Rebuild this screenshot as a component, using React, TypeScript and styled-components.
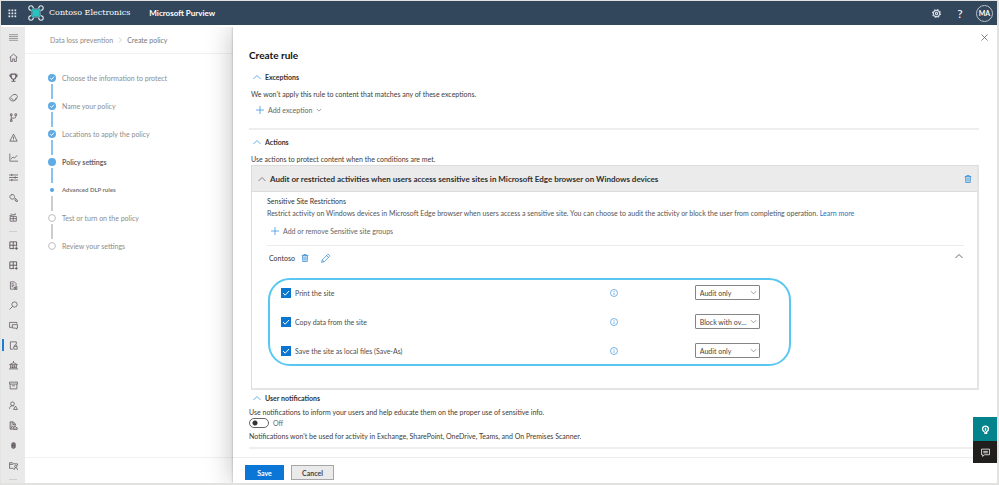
import React from 'react';
import styled, { createGlobalStyle, css } from 'styled-components';

const Global = createGlobalStyle`
  *, *::before, *::after { box-sizing: border-box; }
  body { margin: 0; background: #fff; }
  body, button, select, input { font-family: Lato, "Open Sans", "Noto Sans", sans-serif; }
  button { padding: 0; border: 0; background: none; color: inherit; }
  h1, h2, h3, p, ol, ul { margin: 0; padding: 0; }
  ol, ul { list-style: none; }
`;

/* ---------- shell ---------- */

const Page = styled.div`
  display: flex;
  flex-direction: column;
  min-height: 100vh;
  overflow: hidden;
  border: solid #e2e3e1;
  border-width: 1px 2px 2px 1px;
  font-size: 7px;
  line-height: 12px;
  color: #3d3b38;
`;

const TopBar = styled.header`
  display: flex;
  align-items: center;
  height: 24px;
  padding: 0 4px 0 6px;
  background: #33475c;
  color: #fff;
  position: relative;
  z-index: 2;
`;

const BarButton = styled.button`
  display: flex;
  align-items: center;
  justify-content: center;
  width: 24px;
  height: 24px;
`;

const WaffleButton = styled(BarButton)`
  width: 10px;
`;

const Brand = styled.a`
  display: flex;
  align-items: center;
  gap: 5px;
  margin-left: 11px;
  color: #fff;
  text-decoration: none;
  font: 8px/12px "DejaVu Serif", serif;
`;

const Product = styled.span`
  margin-left: 19px;
  font-size: 8px;
  font-weight: 700;
`;

const BarActions = styled.div`
  display: flex;
  align-items: center;
  margin-left: auto;
`;

const Help = styled(BarButton)`
  font-size: 12px;
`;

const Avatar = styled.button`
  width: 17px;
  height: 17px;
  margin-left: 4px;
  border: 1px solid #b9c2cb;
  border-radius: 50%;
  font-size: 7px;
  font-weight: 700;
  line-height: 15px;
`;

const Body = styled.div`
  display: grid;
  grid-template-columns: 24px minmax(160px, 208px) minmax(0, 1fr);
  flex: 1;
  margin-top: 2px;
  overflow: hidden;
`;

/* ---------- navigation rail ---------- */

const Rail = styled.nav`
  background: #e9e9e9;
`;

const RailItem = styled.button<{ $active?: boolean }>`
  display: flex;
  align-items: center;
  justify-content: center;
  width: 100%;
  height: 20px;
  color: #625b60;
  ${(p) => p.$active && css`
    background: linear-gradient(#1b7fd6, #1b7fd6) 1px center / 2px 12px no-repeat;
  `}
`;

const RailDivider = styled.hr`
  width: 8px;
  height: 1px;
  margin: 4px auto 3px;
  border: 0;
  background: #cfcfcf;
`;

/* ---------- wizard column ---------- */

const Wizard = styled.main`
  display: flex;
  flex-direction: column;
  background: #fff;
`;

const Crumbs = styled.nav`
  display: flex;
  align-items: center;
  gap: 4px;
  height: 27px;
  padding-left: 25px;
  border-bottom: 1px solid #f1f1f1;
  color: #777;
`;

const Crumb = styled.a`
  color: #8b8b8b;
  text-decoration: none;
`;

const Steps = styled.ol`
  flex: 1;
  padding: 18px 0 0 23px;
`;

const Step = styled.li<{ $kind: string }>`
  display: grid;
  grid-template-columns: 8px 1fr;
  column-gap: 6px;
  height: 28px;
  color: #8c8c8c;
  ${(p) => p.$kind === 'current' && css`font-weight: 700; color: #666;`}
  ${(p) => p.$kind === 'sub' && css`font-size: 6px; font-weight: 700; color: #777;`}
`;

const Track = styled.div`
  display: flex;
  flex-direction: column;
  align-items: center;
`;

const Marker = styled.span`
  display: flex;
  flex: none;
  align-items: center;
  justify-content: center;
  height: 12px;
`;

const Line = styled.span<{ $done: boolean }>`
  flex: 1;
  width: 2px;
  margin-bottom: 1px;
  background: ${(p) => (p.$done ? '#8cc3ee' : '#cdcdcd')};
`;

const WizardFoot = styled.div`
  height: 26px;
  border-top: 1px solid #f1f1f1;
`;

/* ---------- rule panel ---------- */

const Panel = styled.section`
  position: relative;
  display: flex;
  flex-direction: column;
  background: #fff;
  box-shadow: 0 0 2px rgba(0, 0, 0, 0.3), 0 0 26px rgba(0, 0, 0, 0.26);
`;

const CloseRow = styled.div`
  display: flex;
  justify-content: flex-end;
  padding: 4px 8px 0 0;
`;

const IconButton = styled.button`
  display: flex;
  align-items: center;
  justify-content: center;
  width: 10px;
  height: 12px;
  color: #555;
`;

const PanelBody = styled.div`
  flex: 1;
  padding: 4px 18px 0 16px;
`;

const Title = styled.h1`
  padding-bottom: 8px;
  font-size: 10px;
  line-height: 16px;
  color: #111;
`;

const Section = styled.section`
  padding-bottom: 7px;
  border-bottom: 2px solid #eee;
`;

const ActionsSection = styled.section`
  padding-top: 6px;
`;

const NoticeSection = styled(Section)`
  padding: 2px 0 5px;
`;

const SectionTitle = styled.h2`
  display: flex;
  align-items: center;
  gap: 4px;
  padding-left: 4px;
  font-size: 7px;
  line-height: 12px;
  color: #333;
`;

const Text = styled.p`
  padding: 5px 0 0 2px;
`;

const NoticeText = styled.p`
  padding-top: 2px;
`;

const AddButton = styled.button`
  display: flex;
  align-items: center;
  gap: 4px;
  margin-top: 4px;
  padding-left: 7px;
  height: 12px;
  font-size: 7px;
  color: #666;
`;

const AddException = styled(AddButton)`
  margin-bottom: 5px;
`;

const Card = styled.div`
  margin-left: 2px;
  border: 1px solid #dcdcdc;
  border-right: 2px solid #e4e4e4;
  border-bottom: 2px solid #e4e4e4;
`;

const CardHead = styled.div`
  display: flex;
  align-items: center;
  height: 26px;
  gap: 4px;
  padding: 0 4px 0 6px;
  border-bottom: 1px solid #dcdcdc;
  background: #ebebeb;
`;

const CardTitle = styled.h3`
  flex: 1;
  font-size: 8px;
  color: #2f2f2f;
`;

const CardBody = styled.div`
  padding: 3px 13px 22px 15px;
`;

const GroupTitle = styled.h3`
  font-size: 7px;
  font-weight: 400;
  color: #333;
`;

const Muted = styled.p`
  color: #545454;
`;

const Link = styled.a`
  color: #1476c6;
  text-decoration: none;
`;

const AddGroups = styled(AddButton)`
  margin-top: 6px;
  padding-left: 4px;
`;

const GroupRow = styled.div`
  display: flex;
  align-items: center;
  gap: 11px;
  margin-top: 8px;
  padding: 6px 0 0 2px;
  border-top: 1px solid #ebebeb;
`;

const GroupName = styled.span`
  margin-right: -6px;
  color: #333;
`;

const GroupToggle = styled(IconButton)`
  align-self: flex-start;
  height: 8px;
  margin-left: auto;
`;

const Activities = styled.ul`
  display: grid;
  row-gap: 14px;
  width: 75%;
  min-width: 320px;
  margin: 14px 0 0 1px;
  padding: 5px 29px 6px 11px;
  border: 2px solid #58c8f2;
  border-radius: 22px;
`;

const Activity = styled.li`
  display: grid;
  grid-template-columns: minmax(0, 1fr) 86px 65px;
  align-items: center;
`;

const CheckLabel = styled.label`
  display: flex;
  align-items: center;
  gap: 4px;
  color: #4c4c4c;
`;

const Check = styled.input`
  appearance: none;
  width: 10px;
  height: 10px;
  margin: 0;
  background: #fff;
  border: 1px solid #0b76d0;
  &:checked {
    border: 0;
    background:
      url("data:image/svg+xml,%3Csvg xmlns='http://www.w3.org/2000/svg' viewBox='0 0 10 10' fill='none' stroke='white'%3E%3Cpath d='M2 5l2.200 2.200L8 3'/%3E%3C/svg%3E")
      #0b76d0;
  }
`;

const SelectBox = styled.div`
  display: grid;
  align-items: center;
  > * { grid-area: 1 / 1; }
  > svg { justify-self: end; margin-right: 3px; pointer-events: none; }
`;

const Select = styled.select`
  appearance: none;
  width: 100%;
  height: 15px;
  padding: 0 11px 0 4px;
  border: 1px solid #858585;
  border-radius: 1px;
  background: #fff;
  font-size: 7px;
  line-height: 12px;
  color: #444;
  text-overflow: ellipsis;
`;

const ToggleLabel = styled.label`
  display: flex;
  align-items: center;
  gap: 4px;
  height: 10px;
  color: #666;
`;

const Toggle = styled.input`
  appearance: none;
  width: 20px;
  height: 10px;
  margin: 0;
  border: 1px solid #666;
  border-radius: 5px;
  background: radial-gradient(circle at 5px 4px, #333 2px, transparent 3px);
  &:checked { background: radial-gradient(circle at 13px 4px, #333 2px, transparent 3px); }
`;

const PanelFoot = styled.footer`
  display: flex;
  align-items: center;
  gap: 7px;
  height: 26px;
  padding: 4px 12px 0;
  border-top: 1px solid #ededed;
`;

const Button = styled.button<{ $primary?: boolean }>`
  height: 15px;
  padding: 0 10px;
  min-width: ${(p) => (p.$primary ? 39 : 42)}px;
  border: 1px solid ${(p) => (p.$primary ? '#0b76d6' : '#a6a6a6')};
  background: ${(p) => (p.$primary ? '#0b76d6' : '#eaeaea')};
  color: ${(p) => (p.$primary ? '#fff' : '#444')};
  font-size: 7px;
  font-weight: 700;
`;

const HelpDock = styled.aside`
  position: absolute;
  right: 0;
  bottom: 20px;
`;

const DockButton = styled.button<{ $dark?: boolean }>`
  display: flex;
  align-items: center;
  justify-content: center;
  width: 24px;
  height: ${(p) => (p.$dark ? 22 : 24)}px;
  background: ${(p) => (p.$dark ? '#201f1e' : '#03838b')};
  color: #fff;
`;

/* ---------- icons ---------- */

const Svg = ({ size = 9, w = 1.4, color, children }: { size?: number; w?: number; color?: string; children: React.ReactNode }) => (
  <svg width={size} height={size} viewBox="0 0 16 16" fill="none" stroke={color || 'currentColor'} strokeWidth={w} aria-hidden="true">
    {children}
  </svg>
);

const Chevron = ({ up, size = 8, color = '#666', w = 1.6 }: { up?: boolean; size?: number; color?: string; w?: number }) => (
  <Svg size={size} color={color} w={w}><path d={up ? 'M1 12l7-7 7 7' : 'M2 5l6 6 6-6'} /></Svg>
);

const Plus = () => <Svg size={8} color="#3f97dc" w={1.6}><path d="M8 0v16M0 8h16" /></Svg>;

const Trash = () => (
  <Svg size={8} color="#2f8bd3" w={1.5}>
    <path d="M1.500 3h13M5.500 3V1h5v2M3 3l.5 12h9L13 3M6.300 6v6M9.700 6v6" />
    <path d="M4 4h8v10H4z" fill="#8fc3ea" stroke="none" opacity=".6" />
  </Svg>
);

const Pencil = () => (
  <Svg size={9} color="#2f8bd3" w={1.3}><path d="M1 15l1.200-4.500L11.500 1.200a1.800 1.800 0 0 1 2.600 0l.7.7a1.800 1.800 0 0 1 0 2.600L5.500 13.800zM10 2.800L13.200 6M2.200 10.500l3.300 3.300" /></Svg>
);

const Info = () => <Svg size={8} color="#3f97dc" w={1.4}><circle cx="8" cy="8" r="7" /><path d="M8 7v5M8 4v1.500" /></Svg>;

const Waffle = () => (
  <svg width="9" height="9" viewBox="0 0 9 9" fill="#e4e9ee" aria-hidden="true">
    {[0, 3, 6].map((y) => [0, 3, 6].map((x) => <rect key={`${x}${y}`} x={x + 0.5} y={y + 0.5} width="1.700" height="1.700" />))}
  </svg>
);

const Logo = () => (
  <svg width="16" height="16" viewBox="0 0 32 32" fill="none" aria-hidden="true">
    <g stroke="#dfe8ec" strokeWidth="2.400">
      <path d="M10.500 6.500A4.500 4.500 0 1 0 6.500 10.500M21.500 6.500a4.500 4.500 0 1 1 4 4M10.500 25.500a4.500 4.500 0 1 1-4-4M21.500 25.500a4.500 4.500 0 1 0 4-4" />
      <path d="M10.500 6c2 3 9 3 11 0M10.500 26c2-3 9-3 11 0M6 10.500c3 2 3 9 0 11M26 10.500c-3 2-3 9 0 11" strokeWidth="1.400" />
    </g>
    <path d="M8 8c4 4 12 4 16 0-4 4-4 12 0 16-4-4-12-4-16 0 4-4 4-12 0-16z" fill="#27c3c3" stroke="#27c3c3" strokeWidth="3" />
  </svg>
);

const Gear = () => (
  <Svg size={9} w={2} color="#d3dae1"><circle cx="8" cy="8" r="5.500" /><circle cx="8" cy="8" r="2" /><circle cx="8" cy="8" r="7" strokeDasharray="2.700 2.800" /></Svg>
);

const railTop: [string, React.ReactNode][] = [
  ['Menu', <path d="M0 3h16M0 6.300h16M0 9.700h16M0 13h16" strokeWidth="1" />],
  ['Home', <path d="M1 8l7-6 7 6M3 7v8h3.500v-4.500h3V15H13V7" />],
  ['Compliance score', <path d="M4 2h8v5a4 4 0 0 1-8 0zM4 3.500H1.500c0 3 1 4 2.800 4.500M12 3.500h2.500c0 3-1 4-2.800 4.500M8 11v3M4.500 14.500h7" strokeWidth="1.800" />],
  ['Classification', <path d="M1 9l6-6 5.500-.5L15 6l-2 5-4 3H5l-3-2zM10 13l2.500-4M4 9l4 4" />],
  ['Connectors', <path d="M4 4v9M4 9h5.500a2.500 2.500 0 0 0 2.500-2.500V5M2.500 1.500h3v3h-3zM10.500 1.500h3v3h-3zM2.500 12h3v3h-3z" />],
  ['Alerts', <path d="M8 2l6.500 12.500h-13zM8 6.500V11M8 12v1.500" />],
  ['Reports', <path d="M1.500 1v13.500H16M3.500 11l3.500-4 3 2 4.500-5" />],
  ['Policies', <path d="M0 3.500h16M0 8h16M0 12.500h16M5 1.500v4M11 6v4M5 10.500v4" />],
  ['Permissions', <path d="M9 9.500A4.200 4.200 0 1 1 9.800 8l5.200 5v2h-2.500v-1.500H11V12zM4.500 4.500h1" />],
  ['Trials', <path d="M2 6h11v8.500H2zM1 4.500l11-2M7.500 6v8M5 3L4 1M9.500 2.500L11 .5M2 10h11" />],
];

const railBottom: [string, React.ReactNode, boolean?][] = [
  ['Solutions', <path d="M1.500 1.500h12v8M1.500 1.500v12h8M7.500 1.500v12M1.500 7.500h12M13 10v6M10 13h6" strokeWidth="1.700" />],
  ['Catalog', <path d="M1.500 1.500h12v8M1.500 1.500v12h8M7.500 1.500v12M1.500 7.500h12M10.500 13h5M13 10.500v5" strokeWidth="1.700" />],
  ['Audit', <path d="M2.500 14.500v-13h7l3 3v4M4.500 5h4M4.500 7.500h5M4.500 10h3M2.500 14.500H8M9 15v-4h2v4zM12 15v-5h2v5z" />],
  ['Content search', <path d="M1 15l5.500-5.500M14.500 6.200a4.700 4.700 0 1 1-9.400 0 4.700 4.700 0 0 1 9.400 0z" />],
  ['Communication compliance', <path d="M5 11H3.500L2 12.500V11H1V2.500h13V5M6 6.500h9v6h-1.500V14.500L11.500 12.500H6z" />],
  ['Data loss prevention', <path d="M7 14.500H2.500v-13h10.500V6M8.500 9.500h6v5h-6zM10 9.500V8a1.500 1.500 0 0 1 3 0v1.500" />, true],
  ['eDiscovery', <path d="M1 6.500h14L8 3zM8 3V0M3 7v6M6.500 7v6M9.500 7v6M13 7v6M0 14h16M2 11h12" />],
  ['Data lifecycle management', <path d="M1 2h14v3.500H1zM2 5.500v8.500h12V5.500M5.500 8.500h5" />],
  ['Insider risk management', <path d="M1 14c0-4 2-5.500 5-5.500 1.200 0 2 .3 2.500.8M9.500 5a3.300 3.300 0 1 1-6.600 0 3.300 3.300 0 0 1 6.600 0zM11.500 9l3.500 6H8z" />],
  ['Records management', <path d="M8 14.500H2v-13h5.500l4 4V8M7 2v4h4M3.500 13L6 9M8.500 15v-5l2-1 2 2 2 1v3z" fill="rgba(98,91,96,.25)" />],
  ['Information protection', <path d="M5 4.500L6.500 3h3L11 4.500v7L9.500 13h-3L5 11.500zM6.500 4v8M9.500 4v8M4.500 8h7" fill="#8a8488" />],
  ['Privacy', <path d="M8 13H1V3h5l1.500 2H15v3M1 6h6M14 9.500a2 2 0 1 1-4 0 2 2 0 0 1 4 0zM9 16c0-3 1-4 3-4s3 1 3 4" />],
];

const steps: { text: string; kind: 'done' | 'current' | 'sub' | 'todo'; line?: 'done' | 'todo' }[] = [
  { text: 'Choose the information to protect', kind: 'done', line: 'done' },
  { text: 'Name your policy', kind: 'done', line: 'done' },
  { text: 'Locations to apply the policy', kind: 'done', line: 'done' },
  { text: 'Policy settings', kind: 'current', line: 'done' },
  { text: 'Advanced DLP rules', kind: 'sub', line: 'todo' },
  { text: 'Test or turn on the policy', kind: 'todo', line: 'todo' },
  { text: 'Review your settings', kind: 'todo' },
];

const StepMark = ({ kind }: { kind: string }) => (
  <svg width="8" height="8" viewBox="0 0 8 8" fill="none" aria-hidden="true">
    {kind === 'todo' && <circle cx="4" cy="4" r="3.400" stroke="#bdbdbd" />}
    {kind === 'sub' && <circle cx="4" cy="4" r="2" fill="#4fa3e3" />}
    {(kind === 'done' || kind === 'current') && <circle cx="4" cy="4" r="4" fill="#5eabe6" />}
    {kind === 'done' && <path d="M2.200 4.100l1.400 1.300 2.300-2.600" stroke="#fff" />}
  </svg>
);

const activities = [
  { id: 'print', text: 'Print the site', value: 'Audit only' },
  { id: 'copy', text: 'Copy data from the site', value: 'Block with override' },
  { id: 'save', text: 'Save the site as local files (Save-As)', value: 'Audit only' },
];

export default function App() {
  return (
    <>
      <Global />
      <Page>
        <TopBar>
          <WaffleButton aria-label="App launcher"><Waffle /></WaffleButton>
          <Brand href="#"><Logo />Contoso Electronics</Brand>
          <Product>Microsoft Purview</Product>
          <BarActions>
            <BarButton aria-label="Settings"><Gear /></BarButton>
            <Help aria-label="Help">?</Help>
            <Avatar>MA</Avatar>
          </BarActions>
        </TopBar>
        <Body>
          <Rail aria-label="Solutions">
            {railTop.map(([name, icon]) => (
              <RailItem key={name} aria-label={name}><Svg>{icon}</Svg></RailItem>
            ))}
            <RailDivider />
            {railBottom.map(([name, icon, active]) => (
              <RailItem key={name} aria-label={name} $active={active}><Svg>{icon}</Svg></RailItem>
            ))}
            <RailDivider />
          </Rail>
          <Wizard>
            <Crumbs aria-label="Breadcrumb">
              <Crumb href="#">Data loss prevention</Crumb>
              <Svg size={6} color="#aaa"><path d="M5 1l7 7-7 7" /></Svg>
              <span>Create policy</span>
            </Crumbs>
            <Steps>
              {steps.map((s) => (
                <Step key={s.text} $kind={s.kind}>
                  <Track>
                    <Marker><StepMark kind={s.kind} /></Marker>
                    {s.line && <Line $done={s.line === 'done'} />}
                  </Track>
                  <span>{s.text}</span>
                </Step>
              ))}
            </Steps>
            <WizardFoot />
          </Wizard>
          <Panel aria-labelledby="rule-title">
            <CloseRow>
              <IconButton aria-label="Close"><Svg size={7} w={1.6}><path d="M1 1l14 14M15 1L1 15" /></Svg></IconButton>
            </CloseRow>
            <PanelBody>
              <Title id="rule-title">Create rule</Title>
              <Section>
                <SectionTitle><Chevron up color="#3f97dc" />Exceptions</SectionTitle>
                <Text>We won't apply this rule to content that matches any of these exceptions.</Text>
                <AddException><Plus />Add exception<Chevron size={6} /></AddException>
              </Section>
              <ActionsSection>
                <SectionTitle><Chevron up color="#3f97dc" />Actions</SectionTitle>
                <Text>Use actions to protect content when the conditions are met.</Text>
                <Card>
                  <CardHead>
                    <Chevron up />
                    <CardTitle>Audit or restricted activities when users access sensitive sites in Microsoft Edge browser on Windows devices</CardTitle>
                    <IconButton aria-label="Delete action"><Trash /></IconButton>
                  </CardHead>
                  <CardBody>
                    <GroupTitle>Sensitive Site Restrictions</GroupTitle>
                    <Muted>
                      Restrict activity on Windows devices in Microsoft Edge browser when users access a sensitive site. You can choose to audit the activity or block the user from completing operation.{' '}
                      <Link href="#">Learn more</Link>
                    </Muted>
                    <AddGroups><Plus />Add or remove Sensitive site groups</AddGroups>
                    <GroupRow>
                      <GroupName>Contoso</GroupName>
                      <IconButton aria-label="Delete Contoso"><Trash /></IconButton>
                      <IconButton aria-label="Edit Contoso"><Pencil /></IconButton>
                      <GroupToggle aria-label="Collapse Contoso"><Chevron up w={2} /></GroupToggle>
                    </GroupRow>
                    <Activities>
                      {activities.map((a) => (
                        <Activity key={a.id}>
                          <CheckLabel><Check type="checkbox" defaultChecked />{a.text}</CheckLabel>
                          <IconButton aria-label={`About ${a.text}`}><Info /></IconButton>
                          <SelectBox>
                            <Select aria-label={a.text} defaultValue={a.value}>
                              <option>Audit only</option>
                              <option>Block with override</option>
                            </Select>
                            <Chevron size={7} w={1.4} />
                          </SelectBox>
                        </Activity>
                      ))}
                    </Activities>
                  </CardBody>
                </Card>
              </ActionsSection>
              <NoticeSection>
                <SectionTitle><Chevron up color="#3f97dc" />User notifications</SectionTitle>
                <NoticeText>Use notifications to inform your users and help educate them on the proper use of sensitive info.</NoticeText>
                <ToggleLabel><Toggle type="checkbox" role="switch" />Off</ToggleLabel>
                <NoticeText>Notifications won't be used for activity in Exchange, SharePoint, OneDrive, Teams, and On Premises Scanner.</NoticeText>
              </NoticeSection>
            </PanelBody>
            <PanelFoot>
              <Button $primary>Save</Button>
              <Button>Cancel</Button>
            </PanelFoot>
            <HelpDock>
              <DockButton aria-label="Guides">
                <Svg size={9} w={2.4}><path d="M6 12C1 9 2 2 8 2s7 7 2 10v3H7v-3M8 5v5" /></Svg>
              </DockButton>
              <DockButton $dark aria-label="Feedback">
                <Svg size={9} w={1.4}><path d="M1 2h14v10H6l-3 3v-3H1zM4 6h8M4 8.500h8" /></Svg>
              </DockButton>
            </HelpDock>
          </Panel>
        </Body>
      </Page>
    </>
  );
}
